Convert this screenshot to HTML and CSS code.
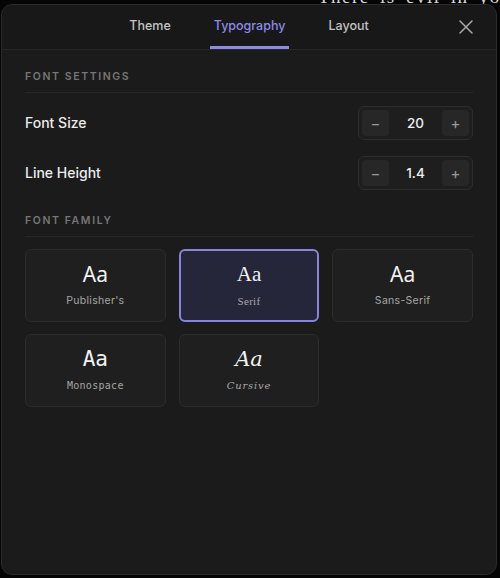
FILE: index.html
```html
<!DOCTYPE html>
<html>

<head>
	<meta charset="utf-8">
	<title>Reader settings</title>
	<link rel="stylesheet" href="styles.css">
</head>

<body>
	<div class="backdrop">
		<p>There is evil in your heart</p>
	</div>

	<div class="panel">
		<div class="tabbar">
			<div class="tabs">
				<div class="tab">Theme</div>
				<div class="tab active">Typography</div>
				<div class="tab">Layout</div>
			</div>
			<button class="close" aria-label="Close">
				<svg width="14" height="14" viewBox="0 0 14 14">
					<path d="M1 1 L13 13 M13 1 L1 13" stroke="#a9a9a9" stroke-width="1.5" stroke-linecap="round" fill="none" />
				</svg>
			</button>
		</div>

		<div class="content">
			<h4 class="section-title">Font Settings</h4>

			<div class="setting-row">
				<span class="setting-label">Font Size</span>
				<div class="stepper">
					<button class="step-btn">&minus;</button>
					<span class="step-value">20</span>
					<button class="step-btn">+</button>
				</div>
			</div>

			<div class="setting-row">
				<span class="setting-label">Line Height</span>
				<div class="stepper">
					<button class="step-btn">&minus;</button>
					<span class="step-value">1.4</span>
					<button class="step-btn">+</button>
				</div>
			</div>

			<h4 class="section-title family-title">Font Family</h4>

			<div class="font-grid">
				<div class="font-card publisher">
					<div class="sample">Aa</div>
					<div class="font-name">Publisher's</div>
				</div>
				<div class="font-card serif selected">
					<div class="sample">Aa</div>
					<div class="font-name">Serif</div>
				</div>
				<div class="font-card sans">
					<div class="sample">Aa</div>
					<div class="font-name">Sans-Serif</div>
				</div>
				<div class="font-card mono">
					<div class="sample">Aa</div>
					<div class="font-name">Monospace</div>
				</div>
				<div class="font-card cursive">
					<div class="sample">Aa</div>
					<div class="font-name">Cursive</div>
				</div>
			</div>
		</div>
	</div>
</body>

</html>
```

FILE: styles.css
```css
body {
	margin: 0;
	background: #050505;
	font-family: Inter, "Noto Sans", sans-serif;
	color: #e8e8e8;
}

/* page text peeking out above the panel */
.backdrop {
	height: 4px;
	overflow: hidden;
	padding-left: 318px;
}

.backdrop p {
	margin: -14px 0 0;
	font: 19px "Liberation Serif", serif;
	letter-spacing: 1.5px;
	word-spacing: 4px;
	color: #d8d8d8;
	white-space: nowrap;
}

.panel {
	margin: 0 3px 0 1px;
	height: 569px;
	background: #1b1b1b;
	border: 1px solid #2b2b2b;
	border-radius: 11px;
	overflow: hidden;
}

.tabbar {
	display: grid;
	grid-template-columns: 1fr auto 1fr;
	align-items: stretch;
	height: 44px;
	border-bottom: 1px solid #262626;
	background: #181818;
}

.tabs {
	grid-column: 2;
	display: flex;
	gap: 35px;
}

.tab {
	display: flex;
	align-items: center;
	padding: 0 4px;
	border-bottom: 3px solid transparent;
	font-size: 12.5px;
	font-weight: 500;
	color: #c4c4c4;
}

.tab.active {
	color: #8f8ae6;
	border-bottom-color: #8f8ae6;
}

.close {
	grid-column: 3;
	justify-self: end;
	align-self: center;
	margin-right: 23px;
	padding: 0;
	background: none;
	border: 0;
	display: flex;
}

.content {
	padding: 20px 23px 0;
}

.section-title {
	margin: 0 0 13px;
	padding-bottom: 8px;
	border-bottom: 1px solid #272727;
	font-size: 10.5px;
	line-height: 14px;
	font-weight: 600;
	letter-spacing: 1.6px;
	text-transform: uppercase;
	color: #767676;
}

.family-title {
	margin-top: 24px;
	margin-bottom: 12px;
}

.setting-row {
	display: flex;
	align-items: center;
	justify-content: space-between;
	margin-bottom: 16px;
}

.setting-label {
	font-size: 14px;
	font-weight: 500;
	color: #ececec;
	margin-top: -2px;
}

.stepper {
	display: flex;
	align-items: center;
	justify-content: space-between;
	box-sizing: border-box;
	width: 115px;
	height: 34px;
	padding: 3px;
	background: #1e1e1e;
	border: 1px solid #2d2d2d;
	border-radius: 6px;
}

.step-btn {
	width: 27px;
	height: 26px;
	padding: 0;
	border: 0;
	border-radius: 4px;
	background: #272727;
	color: #9a9a9a;
	font: 15px Inter, sans-serif;
}

.step-value {
	font-size: 13.5px;
	font-weight: 500;
	color: #eeeeee;
}

.font-grid {
	display: grid;
	grid-template-columns: repeat(3, 1fr);
	gap: 12px 13px;
}

.font-card {
	display: flex;
	flex-direction: column;
	align-items: center;
	gap: 8px;
	box-sizing: border-box;
	height: 73px;
	padding-top: 12px;
	background: #1f1f1f;
	border: 1px solid #2c2c2c;
	border-radius: 6px;
}

.font-card.selected {
	background: #25263a;
	border: 2px solid #8884dc;
	padding-top: 11px;
}

.sample {
	font-size: 21px;
	line-height: 24px;
	color: #f2f2f2;
}

.font-name {
	font-size: 10.5px;
	line-height: 14px;
	color: #a6a6a6;
	letter-spacing: 0.3px;
}

.publisher .sample,
.sans .sample {
	font-family: "Noto Sans", sans-serif;
}

.serif .sample,
.serif .font-name {
	font-family: "Liberation Serif", serif;
}

.serif .font-name {
	font-size: 11px;
}

.mono .sample,
.mono .font-name {
	font-family: "DejaVu Sans Mono", monospace;
}

.mono .font-name {
	font-size: 10px;
}

.cursive .sample,
.cursive .font-name {
	font-family: "DejaVu Serif", serif;
	font-style: italic;
}

.cursive .font-name {
	font-size: 10px;
	letter-spacing: 0.8px;
}
```
